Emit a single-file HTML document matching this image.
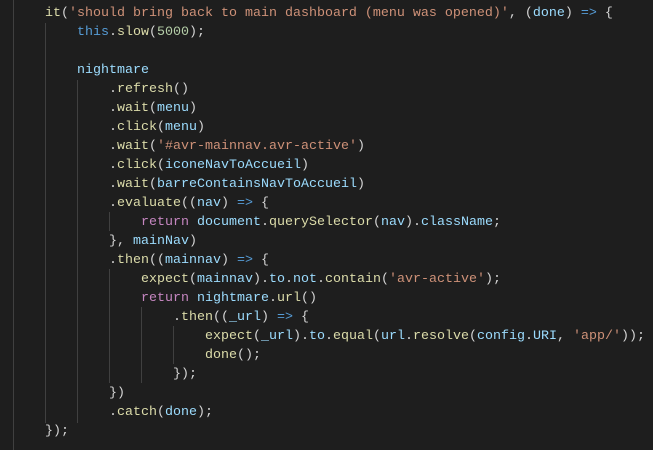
<!DOCTYPE html>
<html><head><meta charset="utf-8"><style>
html,body{margin:0;padding:0;background:#1e1e1e;width:653px;height:450px;overflow:hidden}
#c{position:relative;width:653px;height:450px}
.l{position:absolute;left:13px;height:19px;line-height:19px;white-space:pre;font-family:"Liberation Mono",monospace;font-size:13.33px;color:#d4d4d4}
.g{position:absolute;width:1px;background:#404040}
.s{color:#ce9178}.f{color:#dcdcaa}.v{color:#9cdcfe}.k{color:#569cd6}.r{color:#c586c0}.n{color:#b5cea8}
</style></head><body><div id="c">
<div class="g" style="left:13px;top:0;height:450px"></div>
<div class="g" style="left:45px;top:23px;height:400px"></div>
<div class="g" style="left:77px;top:80px;height:343px"></div>
<div class="g" style="left:109px;top:212px;height:19px"></div>
<div class="g" style="left:109px;top:269px;height:114px"></div>
<div class="g" style="left:141px;top:307px;height:76px"></div>
<div class="g" style="left:173px;top:326px;height:38px"></div>
<div class="l" style="top:4px">    <span class="f">it</span>(<span class="s">'should bring back to main dashboard (menu was opened)'</span>, (<span class="v">done</span>) <span class="k">=&gt;</span> {</div>
<div class="l" style="top:23px">        <span class="k">this</span>.<span class="f">slow</span>(<span class="n">5000</span>);</div>
<div class="l" style="top:61px">        <span class="v">nightmare</span></div>
<div class="l" style="top:80px">            .<span class="f">refresh</span>()</div>
<div class="l" style="top:99px">            .<span class="f">wait</span>(<span class="v">menu</span>)</div>
<div class="l" style="top:118px">            .<span class="f">click</span>(<span class="v">menu</span>)</div>
<div class="l" style="top:137px">            .<span class="f">wait</span>(<span class="s">'#avr-mainnav.avr-active'</span>)</div>
<div class="l" style="top:156px">            .<span class="f">click</span>(<span class="v">iconeNavToAccueil</span>)</div>
<div class="l" style="top:175px">            .<span class="f">wait</span>(<span class="v">barreContainsNavToAccueil</span>)</div>
<div class="l" style="top:194px">            .<span class="f">evaluate</span>((<span class="v">nav</span>) <span class="k">=&gt;</span> {</div>
<div class="l" style="top:213px">                <span class="r">return</span> <span class="v">document</span>.<span class="f">querySelector</span>(<span class="v">nav</span>).<span class="v">className</span>;</div>
<div class="l" style="top:232px">            }, <span class="v">mainNav</span>)</div>
<div class="l" style="top:251px">            .<span class="f">then</span>((<span class="v">mainnav</span>) <span class="k">=&gt;</span> {</div>
<div class="l" style="top:270px">                <span class="f">expect</span>(<span class="v">mainnav</span>).<span class="v">to</span>.<span class="v">not</span>.<span class="f">contain</span>(<span class="s">'avr-active'</span>);</div>
<div class="l" style="top:289px">                <span class="r">return</span> <span class="v">nightmare</span>.<span class="f">url</span>()</div>
<div class="l" style="top:308px">                    .<span class="f">then</span>((<span class="v">_url</span>) <span class="k">=&gt;</span> {</div>
<div class="l" style="top:327px">                        <span class="f">expect</span>(<span class="v">_url</span>).<span class="v">to</span>.<span class="f">equal</span>(<span class="v">url</span>.<span class="f">resolve</span>(<span class="v">config</span>.<span class="v">URI</span>, <span class="s">'app/'</span>));</div>
<div class="l" style="top:346px">                        <span class="f">done</span>();</div>
<div class="l" style="top:365px">                    });</div>
<div class="l" style="top:384px">            })</div>
<div class="l" style="top:403px">            .<span class="f">catch</span>(<span class="v">done</span>);</div>
<div class="l" style="top:422px">    });</div>
</div></body></html>
